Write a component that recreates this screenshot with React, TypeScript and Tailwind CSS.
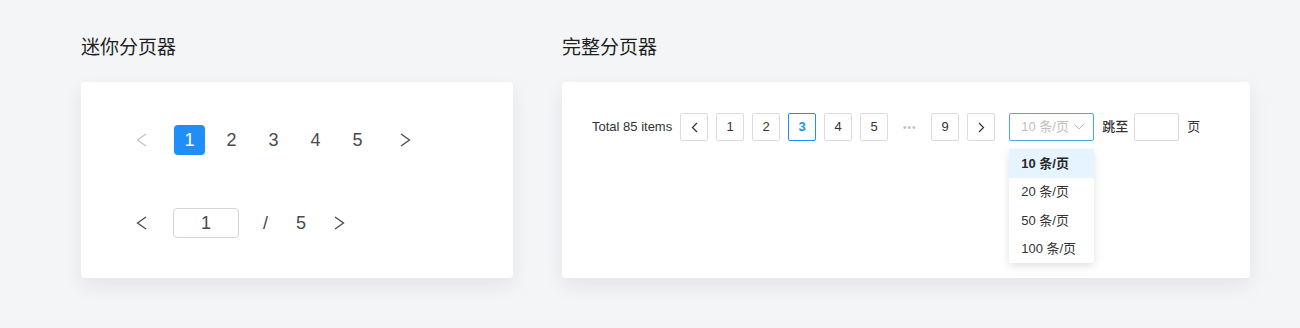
import React from 'react';

const font = { fontFamily: '"Helvetica Neue", "Liberation Sans", Arial, "Noto Sans CJK SC", sans-serif' };

function Chevron({ dir, className }: { dir: 'left' | 'right' | 'down'; className?: string }) {
  if (dir === 'down') {
    return (
      <svg width="10" height="6" viewBox="0 0 10 6" className={className} fill="none" stroke="currentColor" strokeWidth="1">
        <polyline points="0.5,0.5 5,5 9.5,0.5" />
      </svg>
    );
  }
  return (
    <svg width="11" height="14" viewBox="0 0 11 14" className={className} fill="none" stroke="currentColor" strokeWidth="1.3">
      {dir === 'left' ? <polyline points="10,1 1.5,7 10,13" /> : <polyline points="1,1 9.5,7 1,13" />}
    </svg>
  );
}

function SmallArrow({ dir }: { dir: 'left' | 'right' }) {
  return (
    <svg width="7" height="11" viewBox="0 0 7 11" fill="none" stroke="currentColor" strokeWidth="1.2">
      {dir === 'left' ? <polyline points="6,1 1.5,5.5 6,10" /> : <polyline points="1,1 5.5,5.5 1,10" />}
    </svg>
  );
}

function MiniPager() {
  return (
    <div className="flex flex-col pl-[55px] pt-[43px]">
      <div className="flex items-center h-[30px] text-[18px] text-[#4a4a4a]">
        <span className="w-[11px] flex justify-center text-[#c4c4c4]"><Chevron dir="left" /></span>
        <span className="ml-[27px] w-[31px] h-[30px] rounded-[4px] bg-[#1f8ff7] text-white flex items-center justify-center">1</span>
        {[2, 3, 4, 5].map((n) => (
          <span key={n} className="ml-[11px] w-[31px] h-[30px] flex items-center justify-center">{n}</span>
        ))}
        <span className="ml-[27px] w-[11px] flex justify-center text-[#4a4a4a]"><Chevron dir="right" /></span>
      </div>
      <div className="flex items-center h-[30px] mt-[53px] text-[18px] text-[#4a4a4a]">
        <span className="w-[11px] flex justify-center"><Chevron dir="left" /></span>
        <span className="ml-[26px] w-[66px] h-[30px] rounded-[4px] border border-[#d6d6d6] flex items-center justify-center">1</span>
        <span className="ml-[24px]">/</span>
        <span className="ml-[28px]">5</span>
        <span className="ml-[28px] w-[11px] flex justify-center"><Chevron dir="right" /></span>
      </div>
    </div>
  );
}

function PageBtn({ children, active }: { children: React.ReactNode; active?: boolean }) {
  return (
    <span
      className={
        'w-[28px] h-[28px] rounded-[2px] border flex items-center justify-center text-[13px] bg-white ' +
        (active ? 'border-[#1890ff] text-[#1890ff] font-semibold' : 'border-[#dcdcdc] text-[#333]')
      }
    >
      {children}
    </span>
  );
}

function FullPager() {
  const sizes = ['10 条/页', '20 条/页', '50 条/页', '100 条/页'];
  return (
    <div className="flex items-center pl-[30px] pt-[31px] text-[13px] text-[#333]">
      <span className="mr-[8px]">Total 85 items</span>
      <div className="flex items-center gap-[8px]">
        <PageBtn><SmallArrow dir="left" /></PageBtn>
        <PageBtn>1</PageBtn>
        <PageBtn>2</PageBtn>
        <PageBtn active>3</PageBtn>
        <PageBtn>4</PageBtn>
        <PageBtn>5</PageBtn>
        <span className="w-[27px] flex justify-center text-[#c0c0c0] text-[10px] tracking-[1px]">•••</span>
        <PageBtn>9</PageBtn>
        <PageBtn><SmallArrow dir="right" /></PageBtn>
      </div>
      <div className="relative ml-[14px]">
        <div className="w-[85px] h-[28px] rounded-[2px] border border-[#4aa5f7] flex items-center justify-between pl-[11px] pr-[9px] text-[#bfbfbf]">
          <span>10 条/页</span>
          <Chevron dir="down" />
        </div>
        <div className="absolute left-0 top-[36px] w-[85px] bg-white rounded-[2px] shadow-[0_3px_8px_rgba(0,0,0,0.12)] z-10">
          {sizes.map((s, i) => (
            <div
              key={s}
              className={
                'h-[28.5px] flex items-center pl-[12px] ' +
                (i === 0 ? 'bg-[#e6f4ff] font-bold text-[#262626]' : 'text-[#333]')
              }
            >
              {s}
            </div>
          ))}
        </div>
      </div>
      <span className="ml-[8px] font-medium">跳至</span>
      <span className="ml-[6px] w-[45px] h-[28px] rounded-[2px] border border-[#dcdcdc] bg-white" />
      <span className="ml-[8px]">页</span>
    </div>
  );
}

export default function App() {
  return (
    <div className="w-[1300px] h-[328px] bg-[#f4f5f7] overflow-hidden" style={font}>
      <div className="flex gap-[49px] pl-[81px] pt-[37px]">
        <div className="w-[432px]">
          <h2 className="text-[19px] leading-[22px] font-normal text-[#1f1f1f] mb-[23px]">迷你分页器</h2>
          <div className="h-[196px] bg-white rounded-[4px] shadow-[0_8px_20px_rgba(30,40,60,0.08)]">
            <MiniPager />
          </div>
        </div>
        <div className="w-[688px]">
          <h2 className="text-[19px] leading-[22px] font-normal text-[#1f1f1f] mb-[23px]">完整分页器</h2>
          <div className="h-[196px] bg-white rounded-[4px] shadow-[0_8px_20px_rgba(30,40,60,0.08)]">
            <FullPager />
          </div>
        </div>
      </div>
    </div>
  );
}
